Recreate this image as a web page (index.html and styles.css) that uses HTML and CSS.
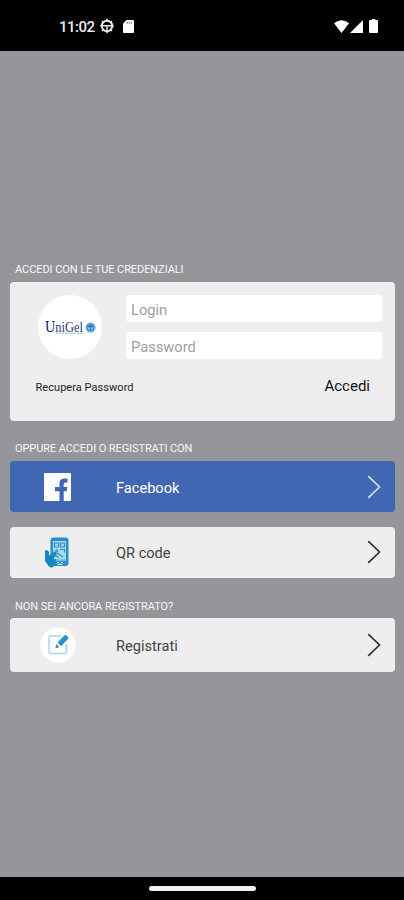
FILE: index.html
```html
<!DOCTYPE html>
<html lang="it">
<head>
<meta charset="utf-8">
<title>UniGel</title>
<link rel="stylesheet" href="styles.css">
</head>
<body>
<header class="status">
  <div class="status-left">
    <span class="clock">11:02</span>
    <svg class="ic-wheel" width="14" height="16" viewBox="0 0 14 16" fill="none" stroke="#e8e8e8">
      <circle cx="7" cy="8" r="5.2" stroke-width="2"/>
      <path d="M7 .8v3M7 8v7.2M2 7.8h10M.3 8h2M11.7 8h2M2 3l1.5 1.5M12 3l-1.5 1.5M2 13l1.5-1.5M12 13l-1.5-1.5" stroke-width="1.5"/>
    </svg>
    <svg class="ic-sd" width="11" height="13" viewBox="0 0 11 13">
      <path d="M3.5 0H10a1 1 0 0 1 1 1v11a1 1 0 0 1-1 1H1a1 1 0 0 1-1-1V3.5z" fill="#fff"/>
      <path d="M4.3 1.8v2M6.3 1.8v2M8.3 1.8v2" stroke="#777" stroke-width="1"/>
    </svg>
  </div>
  <div class="status-right">
    <svg width="15" height="13" viewBox="0 0 15 13"><path d="M0 3.3Q7.5-2.8 15 3.3L7.5 13z" fill="#fff"/></svg>
    <svg class="ic-signal" width="13" height="13" viewBox="0 0 13 13"><path d="M13 0v13H0z" fill="#fff"/></svg>
    <svg class="ic-battery" width="9" height="14" viewBox="0 0 9 14"><path d="M2.8 0h3.4v1H8a1 1 0 0 1 1 1V13a1 1 0 0 1-1 1H1a1 1 0 0 1-1-1V2a1 1 0 0 1 1-1h1.8z" fill="#fff"/></svg>
  </div>
</header>

<main class="screen">
  <h2 class="label label-login">ACCEDI CON LE TUE CREDENZIALI</h2>
  <form class="card login">
    <div class="login-top">
      <div class="logo">
        <svg width="64" height="64" viewBox="0 0 64 64">
          <text x="7" y="37" class="logo-name" textLength="38" lengthAdjust="spacingAndGlyphs"><tspan class="logo-initial">U</tspan>niGel</text>
          <path d="M18 38.3h27" stroke="#8fc9e8" stroke-width="1.2" stroke-dasharray="2 1"/>
          <circle cx="52.5" cy="32.5" r="5.2" fill="#8ccaf0"/>
          <circle cx="52.5" cy="32.5" r="3.4" fill="none" stroke="#3489c9" stroke-width="1.2"/>
          <path d="M50 31.5h5M52.5 30v5" stroke="#2f6fb5" stroke-width="1.3"/>
        </svg>
      </div>
      <div class="fields">
        <input class="field" type="text" placeholder="Login">
        <input class="field" type="password" placeholder="Password">
      </div>
    </div>
    <div class="login-actions">
      <span class="recover">Recupera Password</span>
      <span class="submit">Accedi</span>
    </div>
  </form>

  <h2 class="label label-alt">OPPURE ACCEDI O REGISTRATI CON</h2>
  <div class="card row facebook">
    <div class="row-icon">
      <svg width="27" height="28" viewBox="0 0 27 28">
        <rect width="27" height="28" rx="1" fill="#fff"/>
        <path d="M15.5 28V18.3H11V14H15.5V10.5Q15.5 5.5 20.5 5.5H23.5V9.5H21.5Q19.7 9.5 19.7 11.3V14H23.3L22.8 18.3H19.7V28z" fill="#4267b2"/>
      </svg>
    </div>
    <span class="row-text">Facebook</span>
    <svg class="chev" width="14" height="24" viewBox="0 0 14 24"><path d="M1.2 1.2 12.5 12 1.2 22.8"/></svg>
  </div>
  <div class="card row qr">
    <div class="row-icon">
      <svg width="24" height="31" viewBox="0 0 24 31">
        <rect x="5.5" y=".5" width="18" height="28.5" rx="3" fill="#2790c8"/>
        <rect x="8" y="4" width="13" height="18" fill="#a9d8ee"/>
        <path d="M9.5 6h4v4h-4zM15.5 6h4v4h-4zM9.5 14h4M15 12.5h4.5v3M12 12v4l6 4M9.5 17.5l4 3" fill="none" stroke="#2b8fc5" stroke-width="1.2"/>
        <path d="M0 13.5Q2 12 4 15v3.5L10 14.5Q12.5 15 11 18L8 22.5 10.5 25.5 8 30.5Q4 31 2.5 27.5L0 24z" fill="#1686c0"/>
        <path d="M11 23h10M12 25.5h2M16 25.5h2M12.5 27.3h5" stroke="#d7eef8" stroke-width="1.2"/>
      </svg>
    </div>
    <span class="row-text">QR code</span>
    <svg class="chev" width="14" height="24" viewBox="0 0 14 24"><path d="M1.2 1.2 12.5 12 1.2 22.8"/></svg>
  </div>

  <h2 class="label label-new">NON SEI ANCORA REGISTRATO?</h2>
  <div class="card row register">
    <div class="row-icon">
      <svg width="36" height="36" viewBox="0 0 36 36">
        <circle cx="18" cy="18" r="17.7" fill="#fff"/>
        <path d="M21 9H10.5a1.5 1.5 0 0 0-1.5 1.5V25a1.5 1.5 0 0 0 1.5 1.5H25a1.5 1.5 0 0 0 1.5-1.5V17" fill="none" stroke="#a9d3ec" stroke-width="1.4"/>
        <path d="M17.5 15.5 24.5 8.3Q25.5 7.5 26.5 8.5L28 10Q28.8 11 28 12L21 19.3z" fill="#2b8fc9"/>
        <path d="M16.3 17 19.5 20.2 15.3 21.3z" fill="#2b8fc9"/>
      </svg>
    </div>
    <span class="row-text">Registrati</span>
    <svg class="chev" width="14" height="24" viewBox="0 0 14 24"><path d="M1.2 1.2 12.5 12 1.2 22.8"/></svg>
  </div>
</main>

<footer class="navbar"><div class="handle"></div></footer>
</body>
</html>
```
FILE: styles.css
```css
* { box-sizing: border-box; }
body {
  margin: 0;
  height: 900px;
  display: flex;
  flex-direction: column;
  background: #95969a;
  font-family: Roboto, "Liberation Sans", sans-serif;
  overflow: hidden;
}
svg { display: block; flex: none; }
.status {
  height: 51px;
  flex: none;
  background: #000;
  display: flex;
  justify-content: space-between;
  align-items: center;
  padding: 1px 26px 0 59px;
}
.status-left, .status-right { display: flex; align-items: center; }
.clock { font-size: 15px; font-weight: 500; line-height: 18px; padding-top: 1px; color: #eee; width: 41px; letter-spacing: -0.5px; }
.ic-sd { margin-left: 9px; }
.ic-signal { margin-left: 1px; }
.ic-battery { margin-left: 6px; }

.screen { flex: 1; padding: 210px 9px 0 10px; }
.label {
  margin: 0 0 6px 5px;
  height: 15px;
  padding-top: 1px;
  line-height: 15px;
  font-size: 11px;
  font-weight: 400;
  color: #f6f6f6;
  white-space: nowrap;
}
.label-login { letter-spacing: -0.07px; }
.label-alt { margin-top: 19px; letter-spacing: -0.09px; }
.label-new { margin-top: 20px; margin-bottom: 5px; letter-spacing: -0.07px; }
.card { background: #eee; border-radius: 4px; }
.login { height: 138.5px; padding: 13px 13px 0 28px; }
.login-top { display: flex; justify-content: space-between; }
.logo { width: 64px; height: 64px; border-radius: 50%; background: #fff; }
.logo-name { font-family: "Liberation Serif", serif; font-size: 14px; fill: #34348a; }
.logo-initial { font-size: 16px; fill: #17177c; }
.fields { width: 256px; display: flex; flex-direction: column; gap: 10px; }
.field {
  height: 27px;
  width: 100%;
  border: 0;
  border-radius: 4px;
  background: #fff;
  padding: 3px 5px 0;
  font: 14.7px Roboto, "Liberation Sans", sans-serif;
}
.field::placeholder { color: #a0a0a0; opacity: 1; }
.login-actions { display: flex; justify-content: space-between; align-items: center; margin-top: 18px; padding-right: 12px; }
.recover { font-size: 11px; letter-spacing: 0.05px; color: #222; margin: 3px 0 0 -2.5px; }
.submit { font-size: 15px; color: #111; }
.row { height: 51.5px; display: flex; align-items: center; padding-right: 14.5px; color: #444; }
.row-icon { width: 95px; display: flex; justify-content: center; }
.row-text { margin-left: 11px; flex: 1; font-size: 14.6px; line-height: 20px; padding-top: 2px; }
.chev path { fill: none; stroke: #333; stroke-width: 1.7; }
.facebook { background: #4267b2; color: #fff; height: 51px; padding-top: 1px; }
.facebook .chev path { stroke: #cfdcf5; }
.qr { margin-top: 15px; }
.qr .chev { margin-bottom: 1px; }
.qr .row-icon { padding-right: 2px; }
.register { height: 53.5px; }
.navbar { height: 23px; flex: none; background: #000; display: flex; justify-content: center; align-items: center; }
.handle { width: 107px; height: 5px; border-radius: 3px; background: #f2f2f2; }
```
